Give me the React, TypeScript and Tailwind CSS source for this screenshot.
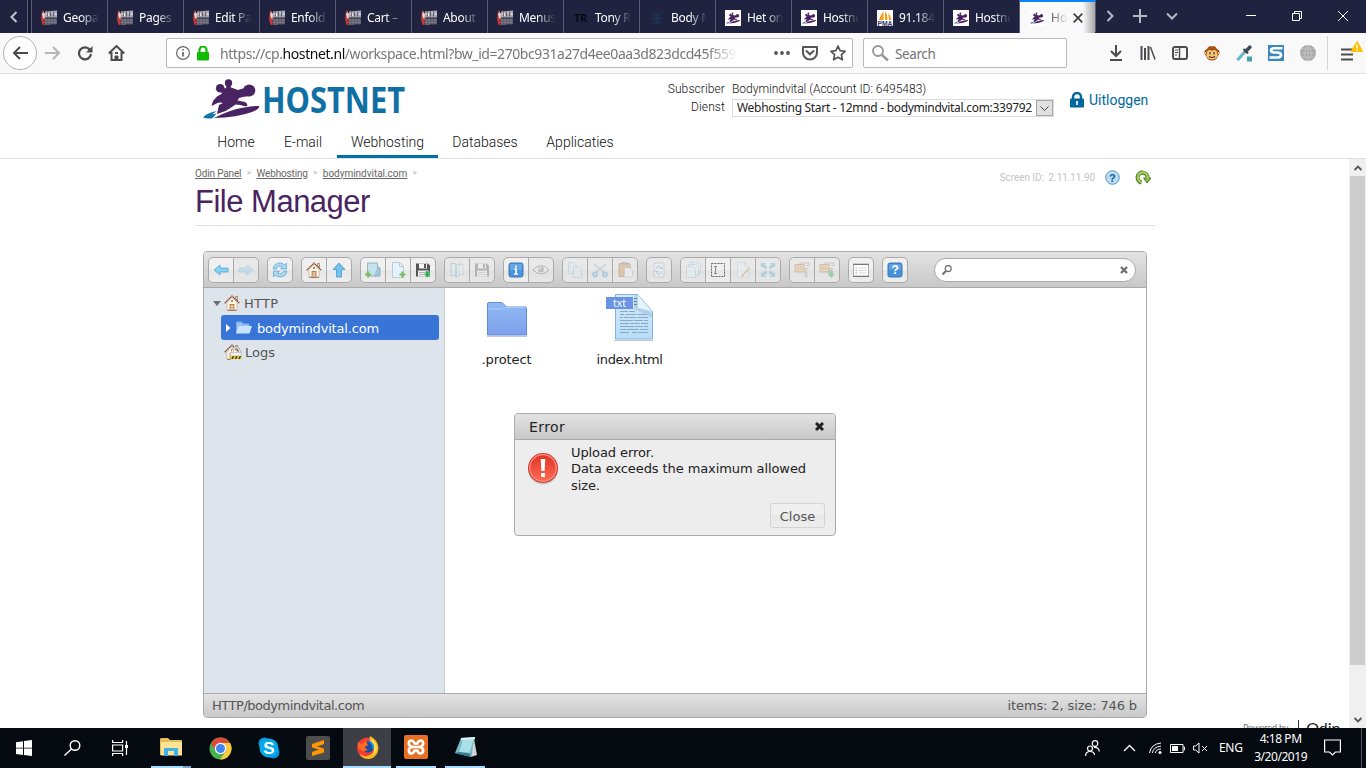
import React from "react";
import type { ReactNode } from "react";

type KidsProps = { children: ReactNode };

const TireIcon = () => (
  <svg width="16" height="16" viewBox="0 0 16 16">
    <path d="M1 1l1.500-.5L4 6l-.5 9H1.500L0 9z" fill="#c23a33" />
    <path d="M1 4l1.500-2L4 4l-.5 5-1.500-1z" fill="#ecd6d3" />
    <path d="M4 1.500L16 .5V7.500H4z" fill="#a9a8b1" />
    <path d="M6.500 2v4.500M9.500 1.500V6.500M12.500 1.500V6.500" stroke="#5f5d6b" strokeWidth="1" />
    <path d="M5 4h1.500M7.500 3v3M10.500 3h1.500M13.500 4H16" stroke="#e8e8ec" />
    <rect x="4" y="8.500" width="12" height="6.500" fill="#625f6e" />
    <path d="M4 10h12M4 12.500h12" stroke="#85828f" strokeWidth="1" strokeDasharray="2 1" />
    <path d="M9 14.500h7" stroke="#3b394c" />
  </svg>
);

const SkaterShape = () => (
  <g>
    <g fill="#4a2362">
      <circle cx="25.500" cy="3.900" r="3.700" />
      <circle cx="17.200" cy="9.200" r="4.300" />
      <circle cx="46.200" cy="11.500" r="6.100" />
      <path d="M23.500 6h4l.5 4h-5z" />
      <path d="M16 8.500Q22 10 28 8.500l7 2.500 10-3 2 9q-6 .5-11 2l-1.500 2.500 7.500 1.500q2.500 1 2.500 4-4 .5-7-1l-5-.5-5 3.500-5 3-8.500 3 2-9L20 24q-4-1-6.500.5L8.500 27l1.500-5 4-4.500 5-3z" />
      <path d="M11 39q15-8 30-10.500 9-2 15-1.500 1.500 2.500-7 6Q34 38.500 11 39z" />
    </g>
    <path d="M0 38.500q4-5 14-6.500l-5 3.200 4.500-.7-4 4.700q-6 .8-9.500-.7z" fill="#1476a8" />
  </g>
);

const HostIcon = () => (
  <svg width="16" height="16" viewBox="0 0 16 16">
    <rect width="16" height="16" fill="#fff" />
    <g transform="translate(1 2.500) scale(.25 .28)">
      <SkaterShape />
    </g>
  </svg>
);

const PmaIcon = () => (
  <svg width="16" height="16" viewBox="0 0 16 16">
    <rect width="16" height="16" fill="#fff" />
    <path d="M6.500 1v9H2Q3 6 6.500 1zM8 1q2.500 3 2.500 9H8zM11 3q3 3 3.500 7H12z" fill="#f6a01a" />
    <text x="0.500" y="15.800" fontSize="7" fontWeight="700" fontFamily="Liberation Sans, sans-serif" fill="#34346c" textLength="15" lengthAdjust="spacingAndGlyphs">PMA</text>
  </svg>
);

const TrIcon = () => (
  <svg width="16" height="16" viewBox="0 0 16 16">
    <text x="1" y="12" fontSize="11" fontWeight="700" fontFamily="Lato, sans-serif" fill="#04060f" textLength="13" lengthAdjust="spacingAndGlyphs">TR</text>
  </svg>
);

const BodyIcon = () => (
  <svg width="16" height="16" viewBox="0 0 16 16" fill="none" stroke="#1c3550" strokeWidth="1.300">
    <path d="M8 3v11M3 3q5 1 4 6M13 3q-5 1-4 6M2 8q5-1 5 5M14 8q-5-1-5 5M3 13h10" />
  </svg>
);

const tabs: { icon: ReactNode; label: string }[] = [
  { icon: <TireIcon />, label: "Geopa" },
  { icon: <TireIcon />, label: "Pages" },
  { icon: <TireIcon />, label: "Edit Pa" },
  { icon: <TireIcon />, label: "Enfold" },
  { icon: <TireIcon />, label: "Cart –" },
  { icon: <TireIcon />, label: "About" },
  { icon: <TireIcon />, label: "Menus" },
  { icon: <TrIcon />, label: "Tony R" },
  { icon: <BodyIcon />, label: "Body M" },
  { icon: <HostIcon />, label: "Het on" },
  { icon: <HostIcon />, label: "Hostne" },
  { icon: <PmaIcon />, label: "91.184" },
  { icon: <HostIcon />, label: "Hostne" },
];

const fade = "[mask-image:linear-gradient(to_right,black_50%,transparent)]";

function TabBar() {
  return (
    <div className="flex h-[33px] bg-[#202340] text-white">
      <div className="flex w-7 items-center justify-center border-r border-[#5b5d74]">
        <svg width="8" height="12" viewBox="0 0 8 12" fill="none" stroke="#c3c4cd" strokeWidth="2"><path d="M6.500 1L1.500 6l5 5" /></svg>
      </div>
      <div className="w-1 border-r border-[#5b5d74] bg-[#171a30]" />
      {tabs.map((t, i) => (
        <div key={i} className="flex w-[76px] items-center border-r border-[#5b5d74] pl-[9px] pt-[2px]">
          {t.icon}
          <span className={`ml-[6px] w-[36px] overflow-hidden whitespace-nowrap text-[12px] leading-4 tracking-[-0.3px] ${fade}`}>{t.label}</span>
        </div>
      ))}
      <div className="flex w-[75px] items-center border-t-2 border-[#0a84ff] bg-[linear-gradient(to_right,#f9f9fa_84%,#a5a5a9)] pl-[9px] text-[#606064]">
        <HostIcon />
        <span className="ml-[6px] w-[17px] overflow-hidden whitespace-nowrap text-[12px] leading-4 [mask-image:linear-gradient(to_right,black_10%,transparent)]">Ho</span>
        <svg className="ml-[5px]" width="10" height="10" viewBox="0 0 10 10" stroke="#3c3c40" strokeWidth="1.700"><path d="M.7.700l8.600 8.600M9.300.700L.7 9.300" /></svg>
      </div>
      <div className="flex h-8 flex-1 items-center border-l border-[#5b5d74] text-[#b8b9c4]">
        <svg className="ml-[10px]" width="8" height="12" viewBox="0 0 8 12" fill="none" stroke="currentColor" strokeWidth="2"><path d="M1.500 1l5 5-5 5" /></svg>
        <svg className="ml-[19px]" width="14" height="14" viewBox="0 0 14 14" stroke="currentColor" strokeWidth="2"><path d="M7 0v14M0 7h14" /></svg>
        <svg className="ml-[19px]" width="12" height="8" viewBox="0 0 12 8" fill="none" stroke="currentColor" strokeWidth="2"><path d="M1 1.500l5 5 5-5" /></svg>
        <svg className="ml-[68px]" width="10" height="10" viewBox="0 0 10 10" stroke="#fff"><path d="M0 4.500h10" /></svg>
        <svg className="ml-[36px]" width="10" height="10" viewBox="0 0 10 10" fill="none" stroke="#fff"><path d="M.5 2.500h7v7h-7zM2.500 2.500v-2h7v7h-2" /></svg>
        <svg className="ml-[36px]" width="10" height="10" viewBox="0 0 10 10" stroke="#fff"><path d="M0 0l10 10M10 0L0 10" /></svg>
      </div>
    </div>
  );
}

function AddressBar() {
  return (
    <div className="flex h-[41px] items-center border-b border-[#dcdcdf] bg-[#f9f9fa]">
      <div className="ml-[3px] flex size-[34px] items-center justify-center rounded-full border border-[#b2b2b5] bg-white">
        <svg width="16" height="14" viewBox="0 0 16 14" fill="none" stroke="#4c4c50" strokeWidth="2"><path d="M16 7H2M8 1L2 7l6 6" /></svg>
      </div>
      <svg className="ml-[8px]" width="16" height="14" viewBox="0 0 16 14" fill="none" stroke="#b5b5b8" strokeWidth="2"><path d="M0 7h14M8 1l6 6-6 6" /></svg>
      <svg className="ml-[16px]" width="16" height="16" viewBox="0 0 16 16"><path d="M12.700 4.500A6 6 0 1 0 14 9" fill="none" stroke="#4c4c50" strokeWidth="2.200" /><path d="M15.500 1v6.500H9z" fill="#4c4c50" /></svg>
      <svg className="ml-[15px]" width="17" height="16" viewBox="0 0 17 16" fill="none" stroke="#4c4c50" strokeWidth="2"><path d="M.8 8.500L8.500 1l7.700 7.500M3.500 7v8h10V7" /><path d="M7 15v-4h3v4" fill="#4c4c50" strokeWidth="1" /><path d="M7 8h3" /></svg>
      <div className="ml-[41px] flex h-[30px] w-[687px] items-center rounded-[2px] border border-[#b9b9bb] bg-white">
        <svg className="ml-[9px]" width="14" height="14" viewBox="0 0 14 14" fill="none" stroke="#68686b"><circle cx="7" cy="7" r="6.400" strokeWidth="1.200" /><path d="M7 6v4.500M7 3v1.600" strokeWidth="1.700" /></svg>
        <svg className="ml-[7px]" width="12" height="15" viewBox="0 0 12 15"><rect y="6" width="12" height="8.500" rx="1" fill="#12bc00" /><path d="M2.500 7V4a3.500 3.500 0 0 1 7 0v3" stroke="#12bc00" strokeWidth="2.200" fill="none" /></svg>
        <span className="relative top-px ml-[11px] w-[518px] overflow-hidden whitespace-nowrap text-[14px] leading-5 tracking-[-0.43px] text-[#77777b] [mask-image:linear-gradient(to_right,black_94%,transparent)]">
          https://cp.<span className="text-[#0c0c0d]">hostnet.nl</span>/workspace.html?bw_id=270bc931a27d4ee0aa3d823dcd45f559
        </span>
        <svg className="ml-[36px]" width="16" height="4" viewBox="0 0 16 4" fill="#55555a"><circle cx="2" cy="2" r="1.900" /><circle cx="8" cy="2" r="1.900" /><circle cx="14" cy="2" r="1.900" /></svg>
        <svg className="ml-[12px]" width="16" height="15" viewBox="0 0 16 15" fill="none" stroke="#55555a" strokeWidth="2"><path d="M1 1h14v5.500a7 7 0 0 1-14 0z" strokeLinejoin="round" /><path d="M4.500 5L8 8.300 11.500 5" strokeLinecap="round" /></svg>
        <svg className="ml-[12px]" width="16" height="16" viewBox="0 0 16 16" fill="none" stroke="#55555a" strokeWidth="1.700" strokeLinejoin="round"><path d="M8 1l2.100 4.700 5 .6-3.700 3.400 1 5.100L8 12.300l-4.400 2.500 1-5.100L.9 6.300l5-.6z" /></svg>
      </div>
      <div className="ml-[10px] flex h-[30px] w-[204px] items-center rounded-[2px] border border-[#b9b9bb] bg-white">
        <svg className="ml-[8px]" width="17" height="16" viewBox="0 0 17 16" fill="none" stroke="#97979a"><circle cx="6" cy="6" r="5" strokeWidth="1.900" /><path d="M9.500 9.500l6.500 6" strokeWidth="2.500" /></svg>
        <span className="relative top-px ml-[6px] text-[13.500px] leading-5 tracking-[-0.4px] text-[#727277]">Search</span>
      </div>
      <svg className="ml-[42px]" width="14" height="16" viewBox="0 0 14 16" fill="none" stroke="#4c4c50" strokeWidth="2"><path d="M7 0v11M2 6l5 5 5-5M1 15h12" /></svg>
      <svg className="ml-[17px]" width="16" height="14" viewBox="0 0 16 14" stroke="#4c4c50" strokeWidth="2"><path d="M1.500 0v14M5 2v12M8.500 0v14" /><path d="M10.500 1l4.500 12.500" strokeWidth="1.500" /></svg>
      <svg className="ml-[16px]" width="16" height="14" viewBox="0 0 16 14" fill="none" stroke="#4c4c50"><rect x="1" y="1" width="14" height="12" rx="2" strokeWidth="2" /><path d="M7.500 1v12" strokeWidth="1.500" /><path d="M3 4h3M3 6.500h3M3 9h2" /></svg>
      <svg className="ml-[16px]" width="16" height="16" viewBox="0 0 16 16"><path d="M3 4Q5 0 8 1.500 11 0 13 4q3 1 2.600 4-.3 2-1.600 2.500-1 5-6 5t-6-5Q.7 10 .4 8 0 5 3 4z" fill="#a65413" /><path d="M3.500 6q2.500-2 4.500 0 2-2 4.500 0l1 4q0 4-5.500 4.500Q2.500 14 2.500 10z" fill="#f3c57f" /><path d="M1.500 7v2M14.500 7v2" stroke="#f3c57f" strokeWidth="1.300" /><path d="M6 7v2.500M10 7v2.500M5 11.500q3 2 6 0" stroke="#4d2509" strokeWidth="1.100" fill="none" /></svg>
      <svg className="ml-[16px]" width="17" height="17" viewBox="0 0 17 17"><path d="M1.500 15l8-9" stroke="#8fa0aa" strokeWidth="3" /><path d="M1.500 15l6-6.500" stroke="#4cc6df" strokeWidth="2.200" /><path d="M7.500 4l4.500 4.500" stroke="#3b4754" strokeWidth="2" /><path d="M10 6l3.800-3.800" stroke="#3b4754" strokeWidth="3.500" strokeLinecap="round" /><rect x="11" y="11.500" width="5" height="5" fill="#43a3ae" /></svg>
      <svg className="ml-[15px]" width="16" height="16" viewBox="0 0 16 16"><rect width="16" height="16" fill="#3b86bd" /><path d="M14.500 3.200H6Q2.800 3.500 3 5.500q.2 1.800 3 2h4q3.200.3 3 2.700-.3 2-3 2.300H1.500" stroke="#fff" strokeWidth="2.600" fill="none" /></svg>
      <svg className="ml-[16px]" width="16" height="16" viewBox="0 0 16 16"><circle cx="8" cy="8" r="8" fill="#a7a7a7" /><path d="M8 0v16M0 8h16M2 4h12M2 12h12M8 0Q1 8 8 16M8 0q7 8 0 16" stroke="#c9c9c9" fill="none" strokeWidth=".8" /></svg>
      <div className="ml-[11px] h-[34px] w-px bg-[#d5d5d7]" />
      <svg className="mb-1 ml-[12px]" width="23" height="20" viewBox="0 0 23 20"><path d="M1 8.500h12M1 13.500h12M1 18.500h12" stroke="#4c4c50" strokeWidth="2" /><path d="M16.500.7q.7-.8 1.400 0l5 9.300q.4 1-.7 1H11.500q-1 0-.7-1z" fill="#ffbf00" /><path d="M17 3.500v4M17 8.500v1.500" stroke="#fff" strokeWidth="1.500" /></svg>
    </div>
  );
}

const navItems: [string, string, boolean][] = [
  ["Home", "w-[66px]", false],
  ["E-mail", "w-[68px]", false],
  ["Webhosting", "w-[101px]", true],
  ["Databases", "w-[94px]", false],
  ["Applicaties", "w-[96px]", false],
];

function SiteHeader() {
  return (
    <header className="h-[85px] border-b border-[#dfdfdf] bg-white font-[Roboto,sans-serif] text-[#111]">
      <div className="flex h-[54px] pl-[203px]">
        <svg className="mt-[5px]" width="203" height="41" viewBox="0 0 203 41">
          <SkaterShape />
          <text x="59" y="34.300" fontSize="35" fontWeight="700" fontFamily="Noto Sans, sans-serif" fill="#1170a3" textLength="143" lengthAdjust="spacingAndGlyphs">HOSTNET</text>
        </svg>
        <div className="ml-[254px] mt-[6px] flex w-[65px] flex-col items-end text-[12px] font-light leading-[18px] tracking-[0.1px]">
          <span className="whitespace-nowrap">Subscriber</span>
          <span>Dienst</span>
        </div>
        <div className="ml-[7px] mt-[6px] w-[322px] text-[12px] leading-[18px]">
          <div className="whitespace-nowrap font-light tracking-[-0.02px]">Bodymindvital (Account ID: 6495483)</div>
          <div className="mt-px flex h-[18px] items-center justify-between border border-[#dcdcdc] pl-[4px]">
            <span className="whitespace-nowrap font-['Noto_Sans',sans-serif] text-[12px] tracking-[-0.3px] text-[#222]">Webhosting Start - 12mnd - bodymindvital.com:339792</span>
            <span className="flex h-4 w-[17px] items-center justify-center border border-[#a5a5a5] bg-[#e1e1e1]">
              <svg width="9" height="5" viewBox="0 0 9 5" fill="none" stroke="#444"><path d="M.5.500l4 4 4-4" /></svg>
            </span>
          </div>
        </div>
        <div className="ml-[16px] mt-[16px] flex h-5 items-center text-[14px] text-[#00689c]">
          <svg width="14" height="16" viewBox="0 0 14 16"><rect y="6.500" width="14" height="9" rx="1" fill="#00689c" /><path d="M3 7V5a4 4 0 0 1 8 0v2" stroke="#00689c" strokeWidth="2.400" fill="none" /><path d="M7 9v4" stroke="#fff" strokeWidth="1.700" /></svg>
          <span className="ml-[5px]">Uitloggen</span>
        </div>
      </div>
      <nav className="flex h-[30px] pl-[203px] text-[14px] font-light">
        {navItems.map(([label, width, active]) => (
          <a key={label} className={`${width} flex h-[30px] justify-center border-b-[3px] pt-[4px] leading-5 ${active ? "border-[#0070a5]" : "border-transparent"}`}>{label}</a>
        ))}
      </nav>
    </header>
  );
}

const House = ({ locked = false }: { locked?: boolean }) => (
  <svg width={locked ? 18 : 16} height="16" viewBox={locked ? "0 0 18 16" : "0 0 16 16"}>
    <path d="M3 7.500L8 2.500l5 5V15H3z" fill="#fff8e9" stroke="#c6a986" strokeWidth=".7" />
    <path d="M11.500 1.500h2v4l-2-2z" fill="#f3ddc0" stroke="#93522f" strokeWidth=".6" />
    <path d="M.7 8.200L8 1l7.300 7.200" fill="none" stroke="#793f29" strokeWidth="1.200" strokeDasharray="1.500 .4" />
    <rect x="6" y="9.500" width="4" height="6" fill="#e6bd98" stroke="#8b4c27" strokeWidth=".6" />
    <rect x="7" y="5" width="2" height="2" fill="#bb8b64" />
    <path d="M3 15.500h10" stroke="#8d7564" strokeWidth=".8" />
    {locked && (
      <g>
        <rect x="6.500" y="8" width="11.500" height="8" fill="#dde4eb" />
        <path d="M8.500 9V7a3.500 3.500 0 0 1 7 0v2" fill="none" stroke="#9e9e9e" strokeWidth="2.200" />
        <path d="M8.500 9V7a3.500 3.500 0 0 1 7 0v2" fill="none" stroke="#ececec" strokeWidth="1" />
        <rect x="6.500" y="8.500" width="11" height="3.500" fill="#f1f1ec" stroke="#aaa" strokeWidth=".5" />
        <rect x="6.500" y="12" width="11" height="3" fill="#ebbf21" />
        <path d="M8 15l1.500-3M11.500 15l1.500-3M15 15l1.500-3" stroke="#353530" strokeWidth="1.300" />
      </g>
    )}
  </svg>
);

const Ico = ({ children }: KidsProps) => <svg width="16" height="16" viewBox="0 0 16 16">{children}</svg>;

const Disk = () => (
  <g>
    <path d="M1 1.500h12l2 2v11H1z" fill="#565656" />
    <rect x="4" y="1.500" width="8" height="5" fill="#f6f6f6" />
    <rect x="9" y="2" width="2" height="4" fill="#555" />
    <rect x="3" y="8.500" width="10" height="6" fill="#f2f2f2" />
    <path d="M4 10.500h8M4 12.500h8" stroke="#afafaf" />
  </g>
);
const Plus = () => <path d="M12.500 9.500v6M9.500 12.500h6" stroke="#7cba5c" strokeWidth="2.200" />;
const Sheet = () => <path d="M2.500.500h7l4 4v11h-11zM9.500.500v4h4" fill="#e5f4fc" stroke="#a3c3d5" strokeWidth=".8" />;
const Clamp = () => (
  <g>
    <path d="M5 1h10v2.500h-3M12 6v9M10 6.500h4M10 11h4M10 14h4" stroke="#888" fill="none" strokeWidth=".9" />
    <rect x="1" y="2.500" width="9" height="7.500" fill="#e9a659" stroke="#a76123" strokeWidth=".8" />
    <path d="M2 4.500h7M2 8.500h7" stroke="#f6d0a3" />
    <rect x="4" y="5" width="3" height="2" fill="#fff1d6" stroke="#744621" strokeWidth=".6" />
  </g>
);
const blueArrow = "#87d1f2";

const groups: { icon: ReactNode; off?: boolean }[][] = [
  [
    { icon: <Ico><path d="M1 8l6-5v3h8v4H7v3z" fill={blueArrow} stroke="#58a5d1" strokeWidth=".8" /></Ico> },
    { icon: <Ico><path d="M15 8L9 3v3H1v4h8v3z" fill={blueArrow} stroke="#58a5d1" strokeWidth=".8" /></Ico>, off: true },
  ],
  [{ icon: <Ico><g fill="#a5daf4" stroke="#5c9fc9" strokeWidth=".7"><path d="M1 7Q2 1 8 1q3 0 4.500 2L14.500 1v6H8.500l2-2Q5 2.500 4.500 7z" /><path d="M15 9q-1 6-7 6-3 0-4.500-2l-2 2V9h6l-2 2q5 2.500 6-2z" /></g></Ico> }],
  [
    { icon: <House /> },
    { icon: <Ico><path d="M8 1l6 6.500h-3.500V15h-5V7.500H2z" fill="#74c3ee" stroke="#4a96c8" strokeWidth=".8" /></Ico> },
  ],
  [
    { icon: <Ico><path d="M2.500 1h10v13h-10z" fill="#c3e2ee" stroke="#86a9b8" strokeWidth=".8" /><path d="M12.500 5q2.500 0 2.500 1v8h-6" fill="#9fc8da" stroke="#86a9b8" strokeWidth=".8" /><g transform="translate(-9.500)"><Plus /></g></Ico> },
    { icon: <Ico><Sheet /><Plus /></Ico> },
    { icon: <Ico><Disk /><path d="M10.500 9h3.500v2.500h2L12.200 16 8.500 11.500h2z" fill="#26b44b" stroke="#fff" strokeWidth=".4" /></Ico> },
  ],
  [
    { icon: <Ico><path d="M2 1.500h5v12H2zM7 3.500l4-2V13l-4 2.500z" fill="#d3ecf7" stroke="#6a9ab2" strokeWidth=".9" /><path d="M11 2.500h3v10h-3" fill="#eaf6fb" stroke="#81a8ba" strokeWidth=".8" /></Ico>, off: true },
    { icon: <Ico><Disk /></Ico>, off: true },
  ],
  [
    { icon: <Ico><rect x="1" y="1" width="14" height="14" rx="2" fill="#4893dc" stroke="#3a77b4" /><rect x="2" y="2" width="12" height="6" rx="1" fill="#82baef" opacity=".5" /><path d="M8 3.500v2M6.500 7H8v5M6 12h4" stroke="#fff" strokeWidth="1.700" fill="none" /></Ico> },
    { icon: <Ico><path d="M0 8q8-9 16 0-8 8-16 0z" fill="#eee" stroke="#555" /><circle cx="8" cy="7.500" r="3" fill="#777" /><circle cx="7" cy="6.500" r="1" fill="#eee" /></Ico>, off: true },
  ],
  [
    { icon: <Ico><path d="M1.500.500h5l3 3v8h-8z" fill="#d9eef9" stroke="#7fb0c9" strokeWidth=".8" /><path d="M6.500 4.500h5l3 3v8h-8z" fill="#d9eef9" stroke="#7fb0c9" strokeWidth=".8" /></Ico>, off: true },
    { icon: <Ico><path d="M2 2l11 9M14 2L3 11" stroke="#8f9aa1" strokeWidth="1.500" /><circle cx="3" cy="12.500" r="2" fill="none" stroke="#3b9ad5" strokeWidth="1.800" /><circle cx="13" cy="12.500" r="2" fill="none" stroke="#3b9ad5" strokeWidth="1.800" /></Ico>, off: true },
    { icon: <Ico><rect x="2" y="1.500" width="11" height="13" rx="1" fill="#c88843" stroke="#8d5520" /><rect x="5" y="0" width="5" height="3" fill="#777" /><path d="M7.500 6h5l3 3v6h-8z" fill="#f9f9f9" stroke="#999" strokeWidth=".7" /></Ico>, off: true },
  ],
  [{ icon: <Ico><path d="M3 1h10v14H3z" fill="#eaf3fc" stroke="#8aa2bd" strokeWidth=".9" /><path d="M5.500 6.500Q6 4 8 4q2.500 0 2.500 3M8.500 6.500h3.500M10.500 9.500Q10 12 8 12q-2.500 0-2.500-3M4 9.500h3.500" stroke="#538ed1" fill="none" /></Ico>, off: true }],
  [
    { icon: <Ico><g fill="#e4f3fb" stroke="#7fabc1" strokeWidth=".8"><path d="M5.500.500h7l3 3v8h-10z" /><path d="M3.500 2.500h7l3 3v8h-10z" /><path d="M1.500 4.500h6l3 3v8h-9z" /></g></Ico>, off: true },
    { icon: <Ico><rect x="1.500" y="1.500" width="13" height="13" fill="none" stroke="#666" strokeDasharray="2 1" /><path d="M4 4.500h3M5.500 4.500v7M4 11.500h3" stroke="#888" fill="none" /></Ico> },
    { icon: <Ico><Sheet /><path d="M7.500 13.500l7-7.500" stroke="#dc9a4b" strokeWidth="2.300" /><path d="M6.500 14.500l1.500-1" stroke="#444" /></Ico>, off: true },
    { icon: <Ico><g fill="#4ca7d9"><path d="M1 1h5L4.500 2.500l3 3-2 2-3-3L1 6z" /><path d="M15 1v5l-1.500-1.500-3 3-2-2 3-3L10 1z" /><path d="M1 15v-5l1.500 1.500 3-3 2 2-3 3L6 15z" /><path d="M15 15h-5l1.500-1.500-3-3 2-2 3 3L15 10z" /></g></Ico>, off: true },
  ],
  [
    { icon: <Ico><Clamp /></Ico>, off: true },
    { icon: <Ico><Clamp /><path d="M10.500 8.500H14v3h2L12.200 16 8.500 11.500h2z" fill="#22a844" /></Ico>, off: true },
  ],
  [{ icon: <Ico><rect x=".5" y="2" width="15" height="12" fill="#fff" stroke="#aaa" /><path d="M0 2.500h16M0 14.500h16" stroke="#777" /><path d="M2.500 6h1.500M2.500 8.500h1.500M2.500 11h1.500" stroke="#65b65c" strokeWidth=".8" /><path d="M5.500 6h8M5.500 8.500h8M5.500 11h8" stroke="#ccc" strokeWidth=".8" /></Ico> }],
  [{ icon: <Ico><rect x="1" y="1" width="14" height="14" rx="2" fill="#4592d9" stroke="#3a77b4" /><rect x="2" y="2" width="12" height="6" rx="1" fill="#82baef" opacity=".4" /><text x="4.500" y="12.300" fill="#fff" fontSize="12" fontWeight="700" fontFamily="Liberation Sans, sans-serif">?</text></Ico> }],
];

function Toolbar() {
  return (
    <div className="flex h-9 items-center gap-2 border-b border-[#aaa] bg-[linear-gradient(to_bottom,#e3e3e3,#c8c8c8)] pl-[4px]">
      {groups.map((group, i) => (
        <div key={i} className="flex h-[26px] overflow-hidden rounded-[5px] border border-[#aaa] bg-[linear-gradient(to_bottom,#f0f0f0_50%,#e6e6e6_50%,#eee)]">
          {group.map((b, j) => (
            <button key={j} className={`flex h-6 items-center justify-center ${j < group.length - 1 ? "w-[25px] border-r border-[#aaa]" : "w-6"} ${b.off ? "bg-[#dddddd66]" : ""}`}>
              <span className={b.off ? "opacity-35" : ""}>{b.icon}</span>
            </button>
          ))}
        </div>
      ))}
      <div className="ml-[18px] flex h-6 w-[202px] items-center justify-between rounded-full border border-[#aaa] bg-white pl-[7px] pr-[7px]">
        <svg width="10" height="10" viewBox="0 0 10 10" fill="none" stroke="#707070"><circle cx="6.200" cy="3.500" r="3" strokeWidth="1.300" /><path d="M4 6L.5 9.500" strokeWidth="2" /></svg>
        <svg width="8" height="8" viewBox="0 0 8 8" stroke="#707070" strokeWidth="2.400"><path d="M1 1l6 6M7 1L1 7" /></svg>
      </div>
    </div>
  );
}

function FileManager() {
  return (
    <section className="relative ml-[203px] mt-[25px] flex h-[467px] w-[944px] flex-col overflow-hidden rounded-[4px] border border-[#aaa] bg-white font-[Verdana,'DejaVu_Sans',sans-serif] text-[13px] text-[#222]">
      <Toolbar />
      <div className="flex h-[405px]">
        <aside className="flex w-[241px] items-center border-r border-[#ccc] bg-[#dde4eb]">
          <div className="h-full flex-1 pt-[3px] text-[#555]">
            <div className="flex h-6 items-center pl-[9px]">
              <svg width="8" height="5" viewBox="0 0 8 5"><path d="M0 0h8L4 5z" fill="#707070" /></svg>
              <span className="ml-[3px]"><House /></span>
              <span className="ml-[4px] pt-[2px] tracking-[0.3px]">HTTP</span>
            </div>
            <div className="ml-[17px] flex h-[25px] w-[218px] items-center rounded-[3px] bg-[#3875d7] pl-[5px] text-white">
              <svg width="5" height="8" viewBox="0 0 5 8"><path d="M0 0l4.500 4L0 8z" fill="#fff" /></svg>
              <svg className="ml-[5px]" width="16" height="13" viewBox="0 0 16 13"><path d="M.5 12V1h5l1.500 2h6v2" fill="#99c3f5" stroke="#7aadea" /><path d="M0 12.500L2.500 5H16l-2.500 7.500z" fill="#c9e3fe" /></svg>
              <span className="ml-[5px] pt-[2px] tracking-[-0.16px]">bodymindvital.com</span>
            </div>
            <div className="flex h-6 items-center pl-[20px]"><House locked /><span className="ml-[3px] pt-[2px]">Logs</span></div>
          </div>
          <svg className="mr-[6px]" width="5" height="9" viewBox="0 0 5 9" stroke="#999"><path d="M1.500 0v9M4.500 0v9" /></svg>
        </aside>
        <div className="flex text-center">
          <div className="flex w-[123px] flex-col items-center pt-[14px]">
            <svg width="40" height="35" viewBox="0 0 40 35">
              <defs><linearGradient id="folder" x2="0" y2="1"><stop stopColor="#91baf4" /><stop offset="1" stopColor="#7e9fea" /></linearGradient></defs>
              <path d="M.5 33V2q0-1.500 1.500-1.500h13L19.500 5H38q1.500 0 1.500 1.500V33z" fill="url(#folder)" stroke="#5e8bd3" />
              <path d="M1.500 7h13l4-1.500H38" stroke="#aac9fa" fill="none" /><path d="M0 34.500h40" stroke="#c0c8d7" />
            </svg>
            <span className="mt-[15px] leading-4 tracking-[-0.1px]">.protect</span>
          </div>
          <div className="flex w-[123px] flex-col items-center pt-[5px]">
            <svg width="48" height="48" viewBox="0 0 48 48">
              <defs><linearGradient id="doc" x2="0" y2="1"><stop stopColor="#d4eafa" /><stop offset="1" stopColor="#b9ddf8" /></linearGradient></defs>
              <path d="M9.500 1.500h22l15 17v27.500h-37z" fill="url(#doc)" stroke="#84b2df" />
              <path d="M28 2h4v4q0 8 0 9 7 1 14 5v5L28 16z" fill="#8db5d5" opacity=".4" />
              <path d="M31.500 1.500v14l15 3z" fill="#e6f4fd" stroke="#a7c9e7" strokeWidth=".7" />
              <g stroke="#86a9c8">
                <path d="M14 18.500h8m1 0h6" /><path d="M14 21.500h4m1 0h12m1 0h9" /><path d="M14 24.500h3m1 0h12m1 0h11" /><path d="M14 27.500h13m1 0h9m1 0h4" /><path d="M14 30.500h9m1 0h10m1 0h7" /><path d="M14 33.500h14m1 0h8m1 0h4" /><path d="M14 36.500h6m1 0h12m1 0h8" /><path d="M14 39.500h9m3 0h5m1 0h10" />
              </g>
              <path d="M8 47.500h39" stroke="#bfc4ca" />
              <path d="M28 5.500h3M28 8.500h3M28 11.500h3" stroke="#6683a6" />
              <rect y="4" width="27" height="12" fill="#6894e3" />
              <text x="7" y="13.500" fill="#fff" fontSize="11" fontFamily="Noto Sans, sans-serif" textLength="13" lengthAdjust="spacingAndGlyphs">txt</text>
            </svg>
            <span className="mt-[11px] leading-4 tracking-[-0.32px]">index.html</span>
          </div>
        </div>
      </div>
      <footer className="flex h-6 items-center justify-between border-t border-[#aaa] bg-[linear-gradient(to_bottom,#e3e3e3,#c8c8c8)] pl-2 pr-[9px] text-[#555]">
        <span className="tracking-[-0.47px]">HTTP/bodymindvital.com</span>
        <span className="tracking-[-0.13px]">items: 2, size: 746 b</span>
      </footer>
      <div className="absolute left-[310px] top-[161px] flex h-[123px] w-[322px] flex-col overflow-hidden rounded-[4px] border border-[#aaa] bg-[#ededed]">
        <div className="flex h-[26px] items-center justify-between border-b border-[#aaa] bg-[linear-gradient(to_bottom,#e3e3e3,#c8c8c8)] pl-[14px] pr-[11px] text-[14px]">
          <span className="pt-[2px] tracking-[0.4px]">Error</span>
          <svg width="9" height="9" viewBox="0 0 9 9" stroke="#222" strokeWidth="3"><path d="M1 1l7 7M8 1L1 8" /></svg>
        </div>
        <div className="flex h-[54px] pl-[12px] pt-[4px]">
          <svg className="mt-[8px]" width="32" height="33" viewBox="0 0 32 33">
            <defs><linearGradient id="err" x2="0" y2="1"><stop stopColor="#df3427" /><stop offset="1" stopColor="#ff6b55" /></linearGradient></defs>
            <circle cx="16" cy="17.500" r="15" fill="#c6bebe" />
            <circle cx="16" cy="16" r="15" fill="#cf3a30" /><circle cx="16" cy="16" r="13.300" fill="url(#err)" stroke="#ff9385" strokeWidth="1.200" />
            <path d="M13.700 7h4.600l-.7 12h-3.200zM14 21h4v4h-4z" fill="#fff" />
          </svg>
          <p className="ml-[12px] mt-[0.700px] leading-[16.500px] tracking-[-0.09px]">Upload error.<br />Data exceeds the maximum allowed<br />size.</p>
        </div>
        <button className="mr-[10px] mt-[9px] flex h-[25px] w-[55px] items-center justify-center self-end rounded-[3px] border border-[#d3d3d3] bg-[linear-gradient(to_bottom,#efefef_50%,#e8e8e8_50%,#eee)] pt-[3px] text-[13px] text-[#555]">Close</button>
      </div>
    </section>
  );
}

function Content() {
  return (
    <main className="flex h-[569px] bg-white">
      <div className="h-full w-[1349px] overflow-hidden">
        <div className="ml-[195px] flex h-[67px] w-[960px] justify-between border-b border-[#dfdfdf]">
          <div>
            <div className="mt-[6px] flex h-4 items-center gap-[5.500px] font-[Roboto,sans-serif] text-[10px] tracking-[-0.15px] text-[#666]">
              <u>Odin Panel</u><span className="text-[8px] text-[#aaa]">&gt;</span><u>Webhosting</u><span className="text-[8px] text-[#aaa]">&gt;</span><u className="tracking-[-0.03px]">bodymindvital.com</u><span className="text-[8px] text-[#aaa]">&gt;</span>
            </div>
            <h1 className="mt-[3px] font-['Liberation_Sans',Arial,sans-serif] text-[31px] leading-[36px] tracking-[-0.5px] text-[#4a2362]">File Manager</h1>
          </div>
          <div className="mr-[4px] mt-[10px] flex h-4 items-center font-[Roboto,sans-serif] text-[10px] text-[#c4c4c4]">
            <span className="whitespace-pre tracking-[-0.08px]">Screen ID:  2.11.11.90</span>
            <svg className="ml-[10px]" width="15" height="15" viewBox="0 0 15 15"><circle cx="7.500" cy="7.500" r="6.800" fill="#b8def7" stroke="#6195b8" /><text x="4" y="11.500" fontSize="11" fontWeight="700" fontFamily="Liberation Sans, sans-serif" fill="#20578e">?</text></svg>
            <svg className="ml-[15px]" width="16" height="15" viewBox="0 0 16 15" fill="none"><path d="M6.500 12.500A5 5 0 1 1 12.500 8" stroke="#4a7b22" strokeWidth="4" /><path d="M8.500 8H16l-4 5z" fill="#8aba41" stroke="#4a7b22" /><path d="M6.500 12.300A5 5 0 1 1 12.500 9" stroke="#a6cf5c" strokeWidth="2.200" /></svg>
          </div>
        </div>
        <FileManager />
        <div className="ml-[1243px] mt-[2px] flex items-start font-[Lato,sans-serif] text-[#777]">
          <span className="mt-[2px] whitespace-nowrap text-[9px] leading-3 tracking-[-0.15px]">Powered by</span>
          <span className="ml-[10px] h-4 border-l border-[#333]" />
          <span className="ml-[7px] font-[Lato,sans-serif] text-[16px] leading-[16px] tracking-[-0.1px] text-[#222]">Odin</span>
        </div>
      </div>
      <div className="flex w-[17px] flex-col items-center bg-[#f0f0f0]">
        <svg className="mt-[6px]" width="8" height="6" viewBox="0 0 8 6" fill="none" stroke="#555" strokeWidth="1.800"><path d="M.5 5L4 1.500 7.500 5" /></svg>
        <div className="mt-[5px] h-[489px] w-[15px] bg-[#cdcdcd]" />
        <svg className="mt-[52px]" width="8" height="6" viewBox="0 0 8 6" fill="none" stroke="#555" strokeWidth="1.800"><path d="M.5 1L4 4.500 7.500 1" /></svg>
      </div>
    </main>
  );
}

function Taskbar() {
  const slot = "flex h-10 items-center justify-center";
  return (
    <div className="flex h-10 bg-[#050910] text-white">
      <div className={`${slot} w-12`}><svg width="16" height="16" viewBox="0 0 16 16" fill="#fff"><path d="M0 2.300L7 1.200v6.500H0zM8 1.100L16 0v7.700H8zM0 8.500h7v6.500l-7-1zM8 8.500h8V16l-8-1.100z" /></svg></div>
      <div className={`${slot} w-12`}><svg width="17" height="16" viewBox="0 0 17 16" fill="none" stroke="#fff" strokeWidth="1.400"><circle cx="11" cy="5.500" r="4.800" /><path d="M7.500 9L.5 15.500" /></svg></div>
      <div className={`${slot} w-12`}><svg width="16" height="16" viewBox="0 0 16 16" fill="none" stroke="#fff" strokeWidth="1.200"><path d="M.6 0v2.500h10V0M.6 5h10v6H.6zM.6 16v-2.500h10V16M14.500 1v14" /><path d="M13 5h3v3h-3z" fill="#fff" stroke="none" /></svg></div>
      <div className={`${slot} relative ml-[7px] w-10 border-b-2 border-[#a5dcff]`}>
        <svg width="22" height="18" viewBox="0 0 22 18"><path d="M0 1.500Q0 0 1 0h7l2 2h11q1 0 1 1v14H0z" fill="#e6bd59" /><path d="M1 4h21v13.500H1z" fill="#fce396" /><path d="M4 18V11q0-1 1-1h12q1 0 1 1v7h-4v-5H8v5z" fill="#3fb1e6" /></svg>
        <span className="absolute -bottom-[2px] right-0 h-[2px] w-2 bg-[#7ba3bf]" />
      </div>
      <div className={`${slot} ml-[9px] w-10`}><svg width="23" height="23" viewBox="0 0 23 23"><circle cx="11.500" cy="11.500" r="11" fill="#4caf50" /><path d="M2 6a11 11 0 0 1 19 0H11.500A6 6 0 0 0 6 13z" fill="#df4937" /><path d="M11.500 6H21a11 11 0 0 1-10 16.500L17 14z" fill="#fbcb3e" /><circle cx="11.500" cy="11.500" r="5.700" fill="#fff" /><circle cx="11.500" cy="11.500" r="4.500" fill="#4285f4" /></svg></div>
      <div className={`${slot} ml-[9px] w-10`}><svg width="22" height="22" viewBox="0 0 22 22"><circle cx="6.500" cy="6.500" r="6" fill="#0b9de0" /><circle cx="15.500" cy="15.500" r="6" fill="#0b8fd5" /><circle cx="11" cy="11" r="9.500" fill="#03a9ea" /><text x="5.300" y="16.800" fill="#fff" fontSize="17" fontWeight="700" fontFamily="Liberation Sans, sans-serif">S</text></svg></div>
      <div className={`${slot} ml-[9px] w-10`}><svg width="24" height="24" viewBox="0 0 24 24"><rect width="24" height="24" rx="2" fill="#4d4d4d" /><path d="M6 8l12-4v4l-7 2.500 7 2v4L6 20v-4l7-2.500-7-2z" fill="#ff9800" /></svg></div>
      <div className="ml-[5px] flex h-10 w-12 items-center justify-center border-b-2 border-[#a5dcff] bg-[#3c3f45]"><svg width="23" height="23" viewBox="0 0 23 23"><circle cx="11.500" cy="12" r="10.500" fill="#f23c35" /><path d="M14 0q8 4 8.500 12-.5 9-9 11-8 0-10-5 8 5 13-1 3-5 0-9-4-2-2.500-8z" fill="#ffb51e" /><path d="M16 3q5 4 5 9-1 5-4 7 2-5 0-9-4-3-1-7z" fill="#ffe24b" /><circle cx="12" cy="11" r="5.800" fill="#174fa3" /><path d="M2 5q1 3 4 3 2-3 5-3-1 2 1 4l-3 2q0 2 3 2-3 4-7 1Q1 12 2 5z" fill="#ff6a21" /><path d="M13 5q5 3 4 8" stroke="#2c90d8" strokeWidth="2" fill="none" /></svg></div>
      <div className={`${slot} ml-[5px] w-10 border-b-2 border-[#a5dcff]`}><svg width="24" height="24" viewBox="0 0 24 24"><rect width="24" height="24" rx="2" fill="#e87024" /><path d="M10.500 8.500Q9.500 5.500 7 5.500 4.500 6 4.800 8.700 5 11 8 12q-3 .8-3.200 3.300Q5 18.500 7.500 18.500q2.500-.5 3-3M13.500 15.500q.5 3 3 3 2.700-.3 2.700-3.200Q19 13 16 12q3-.8 3.200-3.300-.2-3.200-2.700-3.200-2.500.3-3 3" fill="none" stroke="#fff" strokeWidth="2.600" strokeLinecap="round" /><path d="M8 12h8M10.500 8.500h3M10.500 15.500h3" stroke="#fff" strokeWidth="2.400" /></svg></div>
      <div className={`${slot} ml-[9px] w-10 border-b-2 border-[#a5dcff]`}><svg width="23" height="22" viewBox="0 0 23 22"><path d="M7 2l14-1-4 20-16-4z" fill="#77b9c9" /><path d="M9 3l11-1-5 16-10-1z" fill="#a9e0e8" /><path d="M7 2l14-1v2L7 4z" fill="#e1eff1" /><path d="M20 3l3 16-6 2z" fill="#d0d5d6" /><path d="M1 17l16 4-2-4-10-1z" fill="#397991" /></svg></div>
      <div className="ml-[600px] flex items-center">
        <svg width="15" height="16" viewBox="0 0 15 16" fill="none" stroke="#fff" strokeWidth="1.200"><circle cx="10" cy="3.500" r="2.800" /><circle cx="5" cy="8.500" r="2.500" /><path d="M.6 16q0-4.500 4.400-4.500T9.500 15M9 7.500q5-.5 5.300 4" /></svg>
        <svg className="ml-[23px]" width="13" height="8" viewBox="0 0 13 8" fill="none" stroke="#fff" strokeWidth="1.300"><path d="M1 7l5.500-5.500L12 7" /></svg>
        <svg className="ml-[13px]" width="13" height="12" viewBox="0 0 13 12" fill="none" stroke="#fff"><path d="M.5 11Q2 2 12 1M3.500 11Q4 5 12 4M6.500 11Q7 7 12 7" /><circle cx="11" cy="10.500" r="1.500" fill="#fff" stroke="none" /></svg>
        <svg className="ml-[8px]" width="15" height="9" viewBox="0 0 15 9" fill="none" stroke="#fff"><path d="M.5.500h12.500v8H.5zM13.500 3h1v3h-1" /><path d="M2 2h6v5H2z" fill="#fff" stroke="none" /></svg>
        <svg className="ml-[8px]" width="15" height="12" viewBox="0 0 15 12" fill="none" stroke="#fff"><path d="M.5 4h2.200L6 1v10L2.700 8H.5zM9 4l5 5M14 4L9 9" /></svg>
        <span className="ml-[11px] text-[12px] tracking-[-0.3px]">ENG</span>
      </div>
      <div className="ml-[10px] mt-[2px] w-[56px] whitespace-nowrap text-center text-[12px] leading-[18px] tracking-[-0.45px]">4:18 PM<br />3/20/2019</div>
      <svg className="ml-[15px] mt-[11px]" width="17" height="17" viewBox="0 0 17 17" fill="none" stroke="#fff" strokeWidth="1.200"><path d="M.6 1h15.800v12h-5L8.500 16l-3-3H.6z" /></svg>
      <div className="ml-auto mr-[4px] h-10 w-px bg-[#555a60]" />
    </div>
  );
}

export default function App() {
  return (
    <div className="flex h-[768px] w-[1366px] flex-col overflow-hidden bg-white font-['Noto_Sans',sans-serif]">
      <TabBar />
      <AddressBar />
      <SiteHeader />
      <Content />
      <Taskbar />
    </div>
  );
}
